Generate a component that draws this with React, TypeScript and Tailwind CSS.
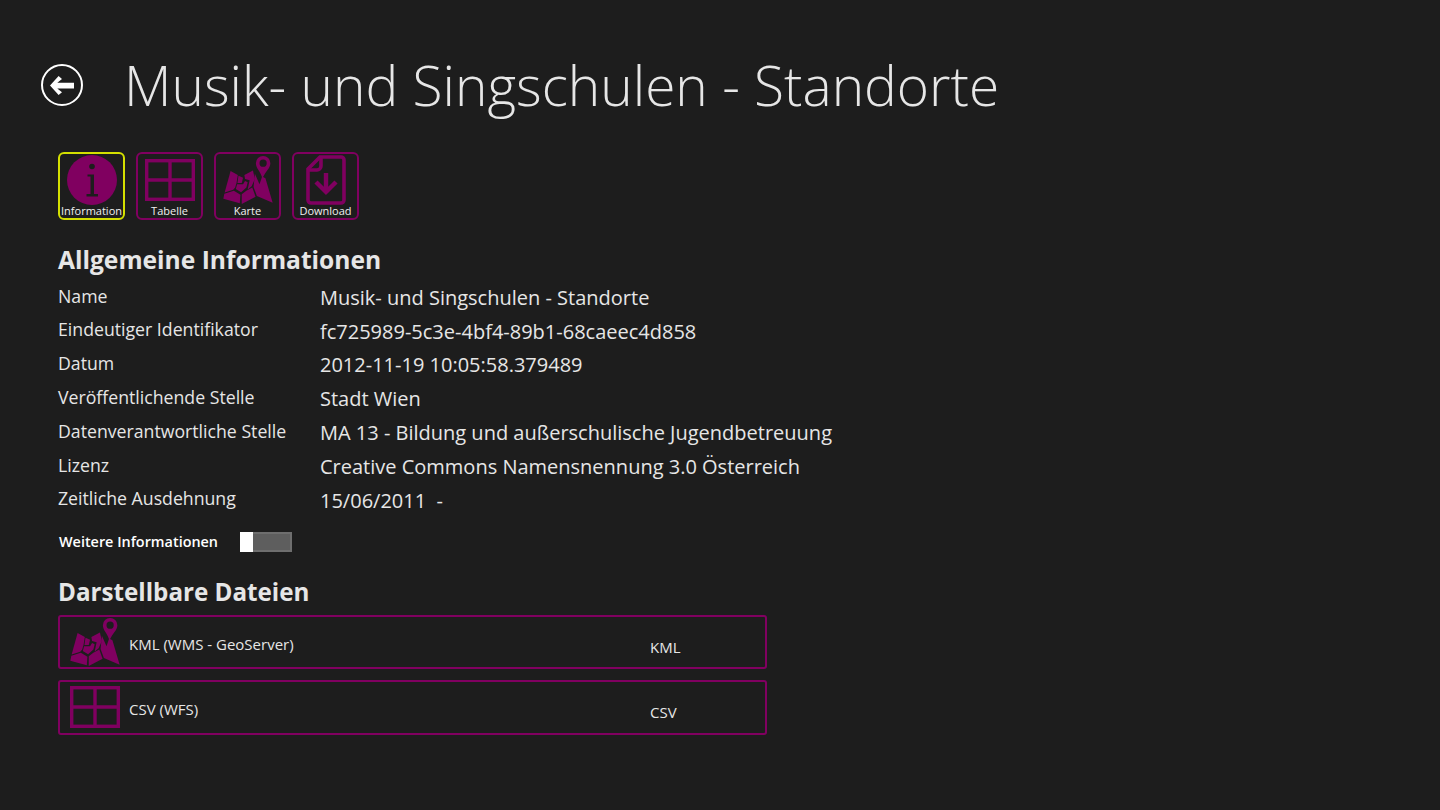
const font = "font-['Open_Sans',sans-serif]"

function TableIcon({ className }: { className: string }) {
  return (
    <svg viewBox="0 0 50 42" className={className} fill="none" stroke="#800060" strokeWidth="3.4">
      <rect x="1.7" y="1.7" width="46.6" height="38.6" />
      <path d="M25 1.5V40.5M1.5 21H48.5" />
    </svg>
  )
}

function MapIcon({ className }: { className: string }) {
  return (
    <svg viewBox="12 10 150 146" className={className} fill="#800060">
      <path d="M34 56L56 68L52 92L48 106L42 113L16 121Z" />
      <path d="M15 125L44 116L64 128L62 154L12 140Z" />
      <path d="M58 70L72 76L68 92L55 92Z" />
      <path d="M54 96L72 96L78 86L86 90L82 106L66 120L50 110Z" />
      <path d="M76 68L102 54L108 80L98 102L86 112L92 84L78 80Z" />
      <path d="M68 126L82 116L100 106L110 134L68 156Z" />
      <path d="M108 64L122 96L130 72L140 78L162 152L114 132L104 104Z" />
      <path
        d="M133 10a22 22 0 0 1 22 22c0 15-15 25-24 46c-6-21-20-31-20-46a22 22 0 0 1 22-22ZM133 21a11 11 0 1 0 0 22a11 11 0 0 0 0-22Z"
        fillRule="evenodd"
      />
    </svg>
  )
}

function InfoIcon() {
  return (
    <svg viewBox="0 0 50 50" className="h-[50px] w-[50px]">
      <circle cx="25" cy="25" r="25" fill="#800060" />
      <circle cx="25" cy="11.5" r="2.8" fill="#1d1d1d" />
      <path d="M20.5 19.5H27V39H31V41.5H19.5V39H23.5V21.5H20.5Z" fill="#1d1d1d" />
    </svg>
  )
}

function DownloadIcon() {
  return (
    <svg viewBox="0 0 40 50" className="h-[50px] w-[40px]" fill="none" stroke="#800060" strokeWidth="3.6">
      <path d="M14 2H35a3 3 0 0 1 3 3V45a3 3 0 0 1-3 3H5a3 3 0 0 1-3-3V14Z" />
      <path d="M15 2V11a4 4 0 0 1-4 4H2" />
      <path d="M20 18V37M10 27L20 37L30 27" strokeWidth="4.4" />
    </svg>
  )
}

function NavButton({ label, active, children }: { label: string; active?: boolean; children: React.ReactNode }) {
  return (
    <div
      className={`flex h-[68px] w-[67px] flex-col items-center rounded-md border-2 pt-px ${
        active ? "border-[#d4e000]" : "border-[#800060]"
      }`}
    >
      <div className="flex h-[50px] shrink-0 items-center justify-center">{children}</div>
      <span className="text-[11px] leading-[12px] whitespace-nowrap text-[#f0f0f0]">{label}</span>
    </div>
  )
}

const rows = [
  ["Name", "Musik- und Singschulen - Standorte"],
  ["Eindeutiger Identifikator", "fc725989-5c3e-4bf4-89b1-68caeec4d858"],
  ["Datum", "2012-11-19 10:05:58.379489"],
  ["Veröffentlichende Stelle", "Stadt Wien"],
  ["Datenverantwortliche Stelle", "MA 13 - Bildung und außerschulische Jugendbetreuung"],
  ["Lizenz", "Creative Commons Namensnennung 3.0 Österreich"],
  ["Zeitliche Ausdehnung", "15/06/2011  -"],
]

function FileRow({ name, type, children }: { name: string; type: string; children: React.ReactNode }) {
  return (
    <div className="flex h-[54.5px] items-center rounded-[3px] border-2 border-[#800060] pl-[10px] text-[15px]">
      <div className="flex w-[50px] justify-center">{children}</div>
      <span className="ml-[9px] w-[521px] translate-y-[2px]">{name}</span>
      <span className="translate-y-[5px]">{type}</span>
    </div>
  )
}

export default function App() {
  return (
    <div className={`${font} h-[810px] w-[1440px] overflow-hidden bg-[#1d1d1d] text-[#e6e6e6]`}>
      <header className="flex h-[152px] items-start pt-[53px] pl-[41px]">
        <svg viewBox="0 0 42 42" className="mt-[11px] h-[42px] w-[42px]" fill="none">
          <circle cx="21" cy="21" r="20" stroke="#fff" strokeWidth="2" />
          <path d="M9 21.5L17.6 12L21 15L16.3 18.8H33V24.5H16.3L21 28.3L17.6 31Z" fill="#fff" />
        </svg>
        <h1 className="ml-[41px] text-[55px] leading-[64px] font-light whitespace-pre">Musik- und Singschulen - Standorte</h1>
      </header>

      <main className="pl-[58px]">
        <div className="flex gap-[11px]">
          <NavButton label="Information" active>
            <InfoIcon />
          </NavButton>
          <NavButton label="Tabelle">
            <TableIcon className="h-[42px] w-[50px]" />
          </NavButton>
          <NavButton label="Karte">
            <MapIcon className="h-[48px] w-[50px]" />
          </NavButton>
          <NavButton label="Download">
            <DownloadIcon />
          </NavButton>
        </div>

        <h2 className="mt-[23px] text-[24.6px] leading-[34px] font-bold">Allgemeine Informationen</h2>
        <div className="mt-[3px] flex flex-col">
          {rows.map(([k, v]) => (
            <div key={k} className="flex h-[33.8px] items-center">
              <span className="w-[262px] -translate-y-px text-[17.7px] whitespace-nowrap">{k}</span>
              <span className="translate-y-px text-[20px] whitespace-pre">{v}</span>
            </div>
          ))}
        </div>

        <div className="mt-[15px] flex h-[20px] items-center pl-px">
          <span className="w-[181px] text-[14.4px] font-semibold text-white">Weitere Informationen</span>
          <div className="flex h-[20px] w-[52px] border-2 border-[#6e6e6e] bg-[#5e5e5e]">
            <div className="-my-[2px] -ml-[2px] h-[20px] w-[13px] bg-white" />
          </div>
        </div>

        <h2 className="mt-[23px] text-[24.2px] leading-[34px] font-bold">Darstellbare Dateien</h2>

        <div className="mt-[6px] flex w-[709px] flex-col gap-[11px]">
          <FileRow name="KML (WMS - GeoServer)" type="KML">
            <MapIcon className="h-[48px] w-[50px]" />
          </FileRow>
          <FileRow name="CSV (WFS)" type="CSV">
            <TableIcon className="h-[42px] w-[50px]" />
          </FileRow>
        </div>
      </main>
    </div>
  )
}
